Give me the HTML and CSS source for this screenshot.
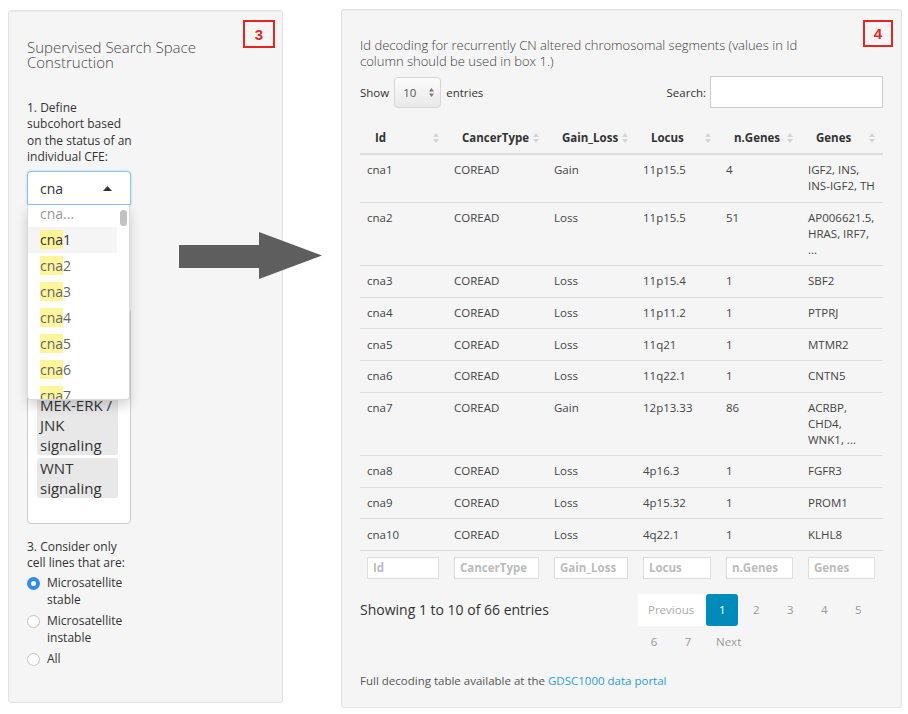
FILE: index.html
```html
<!DOCTYPE html>
<html lang="en">
<head>
<meta charset="utf-8">
<title>CFE search space</title>
<link rel="stylesheet" href="styles.css">
</head>
<body>
<div class="page">
  <section class="well well-left">
    <div class="badge badge-left">3</div>
    <h3 class="well-title">Supervised Search Space Construction</h3>
    <div class="form-col">
      <label class="ctl-label label-1">1. Define subcohort based on the status of an individual CFE:</label>
      <div class="sel-wrap">
        <div class="sel-input">
          <span>cna</span>
          <svg class="caret" width="9" height="5" viewBox="0 0 9 5"><polygon points="0,5 4.5,0 9,5" fill="#333"/></svg>
        </div>
        <div class="sel-dropdown">
          <div class="sel-options">
            <div class="opt opt-muted">cna...</div>
            <div class="opt opt-active"><mark>cna</mark>1</div>
            <div class="opt"><mark>cna</mark>2</div>
            <div class="opt"><mark>cna</mark>3</div>
            <div class="opt"><mark>cna</mark>4</div>
            <div class="opt"><mark>cna</mark>5</div>
            <div class="opt"><mark>cna</mark>6</div>
            <div class="opt"><mark>cna</mark>7</div>
          </div>
          <div class="scroll-thumb"></div>
        </div>
      </div>
      <div class="multi-box">
        <div class="chip">MEK-ERK / JNK signaling</div>
        <div class="chip">WNT signaling</div>
      </div>
      <label class="ctl-label label-3">3. Consider only cell lines that are:</label>
      <div class="radios">
        <div class="radio"><span class="radio-dot checked"></span><span>Microsatellite stable</span></div>
        <div class="radio"><span class="radio-dot"></span><span>Microsatellite instable</span></div>
        <div class="radio"><span class="radio-dot"></span><span>All</span></div>
      </div>
    </div>
  </section>

  <section class="well well-right">
    <div class="badge badge-right">4</div>
    <h4 class="table-title">Id decoding for recurrently CN altered chromosomal segments (values in Id column should be used in box 1.)</h4>
    <div class="dt-controls">
      <div class="len">
        <span>Show</span>
        <div class="len-select">
          <span>10</span>
          <svg width="5" height="9" viewBox="0 0 5 9"><polygon points="2.5,0 5,3.5 0,3.5" fill="#777"/><polygon points="0,5.5 5,5.5 2.5,9" fill="#777"/></svg>
        </div>
        <span>entries</span>
      </div>
      <div class="search">
        <span>Search:</span>
        <div class="search-input"></div>
      </div>
    </div>

    <table class="dt">
      <colgroup>
        <col class="c-id"><col class="c-ct"><col class="c-gl"><col class="c-lo"><col class="c-ng"><col class="c-ge">
      </colgroup>
      <thead>
        <tr>
          <th><div class="th-in"><span>Id</span><svg class="sort" width="6" height="10" viewBox="0 0 6 10"><polygon points="3,0 6,4 0,4"/><polygon points="0,6 6,6 3,10"/></svg></div></th>
          <th><div class="th-in"><span>CancerType</span><svg class="sort" width="6" height="10" viewBox="0 0 6 10"><polygon points="3,0 6,4 0,4"/><polygon points="0,6 6,6 3,10"/></svg></div></th>
          <th><div class="th-in"><span>Gain_Loss</span><svg class="sort" width="6" height="10" viewBox="0 0 6 10"><polygon points="3,0 6,4 0,4"/><polygon points="0,6 6,6 3,10"/></svg></div></th>
          <th><div class="th-in"><span>Locus</span><svg class="sort" width="6" height="10" viewBox="0 0 6 10"><polygon points="3,0 6,4 0,4"/><polygon points="0,6 6,6 3,10"/></svg></div></th>
          <th><div class="th-in"><span>n.Genes</span><svg class="sort" width="6" height="10" viewBox="0 0 6 10"><polygon points="3,0 6,4 0,4"/><polygon points="0,6 6,6 3,10"/></svg></div></th>
          <th><div class="th-in"><span>Genes</span><svg class="sort" width="6" height="10" viewBox="0 0 6 10"><polygon points="3,0 6,4 0,4"/><polygon points="0,6 6,6 3,10"/></svg></div></th>
        </tr>
      </thead>
      <tbody>
        <tr><td>cna1</td><td>COREAD</td><td>Gain</td><td>11p15.5</td><td>4</td><td>IGF2, INS, INS-IGF2, TH</td></tr>
        <tr><td>cna2</td><td>COREAD</td><td>Loss</td><td>11p15.5</td><td>51</td><td>AP006621.5, HRAS, IRF7, ...</td></tr>
        <tr><td>cna3</td><td>COREAD</td><td>Loss</td><td>11p15.4</td><td>1</td><td>SBF2</td></tr>
        <tr><td>cna4</td><td>COREAD</td><td>Loss</td><td>11p11.2</td><td>1</td><td>PTPRJ</td></tr>
        <tr><td>cna5</td><td>COREAD</td><td>Loss</td><td>11q21</td><td>1</td><td>MTMR2</td></tr>
        <tr><td>cna6</td><td>COREAD</td><td>Loss</td><td>11q22.1</td><td>1</td><td>CNTN5</td></tr>
        <tr><td>cna7</td><td>COREAD</td><td>Gain</td><td>12p13.33</td><td>86</td><td>ACRBP, CHD4, WNK1, ...</td></tr>
        <tr><td>cna8</td><td>COREAD</td><td>Loss</td><td>4p16.3</td><td>1</td><td>FGFR3</td></tr>
        <tr><td>cna9</td><td>COREAD</td><td>Loss</td><td>4p15.32</td><td>1</td><td>PROM1</td></tr>
        <tr><td>cna10</td><td>COREAD</td><td>Loss</td><td>4q22.1</td><td>1</td><td>KLHL8</td></tr>
      </tbody>
      <tfoot>
        <tr>
          <td><input class="flt" type="text" placeholder="Id"></td>
          <td><input class="flt" type="text" placeholder="CancerType"></td>
          <td><input class="flt" type="text" placeholder="Gain_Loss"></td>
          <td><input class="flt" type="text" placeholder="Locus"></td>
          <td><input class="flt" type="text" placeholder="n.Genes"></td>
          <td><input class="flt" type="text" placeholder="Genes"></td>
        </tr>
      </tfoot>
    </table>

    <div class="dt-bottom">
      <div class="info">Showing 1 to 10 of 66 entries</div>
      <div class="pager">
        <span class="pg pg-prev">Previous</span>
        <span class="pg pg-active">1</span>
        <span class="pg">2</span>
        <span class="pg">3</span>
        <span class="pg">4</span>
        <span class="pg">5</span>
        <span class="pg">6</span>
        <span class="pg">7</span>
        <span class="pg">Next</span>
      </div>
    </div>

    <p class="note">Full decoding table available at the <a href="#">GDSC1000 data portal</a></p>
  </section>

  <svg class="arrow" width="143" height="47" viewBox="0 0 143 47"><polygon points="0,13 80,13 80,0 143,23.5 80,47 80,36 0,36" fill="#5e5e5e"/></svg>
</div>
</body>
</html>
```
FILE: styles.css
```css
* { box-sizing: border-box; }
html, body { margin: 0; padding: 0; background: #fff; }
body {
  font-family: "Open Sans", "Liberation Sans", sans-serif;
  color: #333;
}

.page {
  position: relative;
  width: 908px;
  height: 714px;
  display: flex;
  align-items: flex-start;
  gap: 58px;
  padding: 9px 6px 0 8px;
}

.well {
  position: relative;
  background: #f5f5f5;
  border: 1px solid #e3e3e3;
  border-radius: 3px;
  box-shadow: inset 0 1px 1px rgba(0, 0, 0, 0.04);
}

.well-left {
  width: 275px;
  height: 693px;
  margin-top: 1px;
  padding: 29px 0 0 18px;
}

.well-right {
  width: 561px;
  height: 699px;
  padding: 27px 18px 0 18px;
}

.badge {
  position: absolute;
  display: flex;
  align-items: center;
  justify-content: center;
  border: 2px solid #e5261f;
  color: #e5261f;
  font-family: "Liberation Sans", Arial, sans-serif;
  font-weight: 700;
  font-size: 15px;
}
.badge-left { top: 9px; right: 7px; width: 32px; height: 28px; }
.badge-right { top: 10px; right: 8px; width: 30px; height: 27px; }

.well-title {
  margin: 0;
  max-width: 200px;
  font-size: 15px;
  line-height: 15px;
  font-weight: 300;
  color: #4a4a4a;
}

.form-col { width: 104px; margin-top: 30px; }

.ctl-label {
  display: block;
  font-size: 12px;
  line-height: 16.3px;
  font-weight: 400;
  color: #333;
}
.label-1 { width: 108px; }

.sel-wrap { position: relative; margin-top: 6px; }

.sel-input {
  height: 34px;
  border: 1px solid #8cc2ef;
  border-radius: 4px 4px 0 0;
  background: #fff;
  box-shadow: 0 0 3px rgba(102, 175, 233, 0.45);
  display: flex;
  align-items: center;
  justify-content: space-between;
  padding: 0 18px 0 12px;
  font-size: 14px;
  color: #333;
}
.caret { display: block; }

.sel-dropdown {
  position: absolute;
  top: 100%;
  left: 0;
  width: 103px;
  height: 195px;
  background: #fff;
  border: 1px solid #d9d9d9;
  border-top: 0;
  border-radius: 0 0 4px 4px;
  box-shadow: 0 6px 12px rgba(0, 0, 0, 0.17);
  overflow: hidden;
  z-index: 5;
}
.sel-options { margin-top: -4.5px; margin-right: 12px; }
.opt {
  height: 26px;
  line-height: 26px;
  padding-left: 12px;
  font-size: 14px;
  color: #666;
  white-space: nowrap;
}
.opt-muted { color: #999; }
.opt-active { background: #f5f5f5; color: #333; }
.opt mark { background: #fff59b; color: inherit; padding: 0; }
.scroll-thumb {
  position: absolute;
  top: 5px;
  right: 2px;
  width: 7px;
  height: 16px;
  border-radius: 4px;
  background: #c2c2c2;
}

.multi-box {
  margin-top: 103px;
  height: 216px;
  border: 1px solid #ccc;
  border-radius: 4px;
  background: #fff;
  padding: 86px 12px 0 9px;
}
.chip {
  background: #e8e8e8;
  border-radius: 3px;
  font-size: 15px;
  line-height: 20px;
  padding: 0 3px;
  color: #333;
  margin-bottom: 3px;
}

.label-3 { margin-top: 15px; }

.radios { margin-top: 3.5px; }
.radio {
  display: flex;
  align-items: flex-start;
  gap: 7px;
  font-size: 12px;
  line-height: 16.5px;
  margin-bottom: 5px;
  color: #333;
}
.radio-dot {
  flex: none;
  width: 13px;
  height: 13px;
  margin-top: 1.5px;
  border-radius: 50%;
  border: 1px solid #c4c4c4;
  background: #fff;
}
.radio-dot.checked { border: 4px solid #2f8cf0; background: #fff; }

/* right panel */
.table-title {
  margin: 0;
  max-width: 470px;
  font-size: 13px;
  line-height: 16px;
  font-weight: 300;
  color: #3f3f3f;
}

.dt-controls {
  margin-top: 7px;
  height: 32px;
  display: flex;
  align-items: center;
  justify-content: space-between;
  font-size: 11.5px;
  color: #333;
}
.len { display: flex; align-items: center; }
.len-select {
  width: 47px;
  height: 31px;
  margin: 0 5px;
  border: 1px solid #d6d6d6;
  border-radius: 4px;
  background: linear-gradient(#fcfcfc, #e9e9e9);
  display: flex;
  align-items: center;
  justify-content: space-between;
  padding: 0 6px 0 8px;
  color: #555;
  font-size: 11.5px;
}
.search { display: flex; align-items: center; }
.search-input {
  width: 173px;
  height: 32px;
  margin-left: 4px;
  border: 1px solid #ccc;
  background: #fff;
}

.dt {
  margin-top: 14px;
  width: 100%;
  border-collapse: collapse;
  table-layout: fixed;
  font-size: 11.5px;
  line-height: 16px;
}
.c-id { width: 87px; }
.c-ct { width: 100px; }
.c-gl { width: 89px; }
.c-lo { width: 83px; }
.c-ng { width: 82px; }
.c-ge { width: 82px; }

.dt th {
  padding: 8px 8px 7px 15px;
  border-bottom: 2px solid #ddd;
  font-weight: 700;
  text-align: left;
  color: #333;
}
.th-in { display: flex; align-items: center; justify-content: space-between; }
.sort { display: block; fill: #d4d4d4; flex: none; }

.dt td {
  padding: 7.3px 5px 7.3px 7px;
  border-top: 1px solid #ddd;
  vertical-align: top;
  color: #444;
}
.dt tfoot td { padding: 6px 8px 6px 7px; }
.flt {
  display: block;
  width: 100%;
  height: 22px;
  margin: 0;
  padding: 0 5px;
  border: 1px solid #ddd;
  background: #fff;
  font-family: inherit;
  font-size: 11.5px;
  font-weight: 700;
}
.flt::placeholder { color: #bbb; }

.dt-bottom {
  margin-top: 9px;
  display: flex;
  justify-content: space-between;
  align-items: flex-start;
}
.info { font-size: 14px; line-height: 32px; color: #333; }
.pager {
  width: 245px;
  display: flex;
  flex-wrap: wrap;
  gap: 0 2px;
}
.pg {
  height: 32px;
  line-height: 32px;
  min-width: 32px;
  padding: 0 10px;
  text-align: center;
  font-size: 11.5px;
  color: #999;
  border-radius: 3px;
}
.pg-prev { background: #fff; color: #aaa; border-radius: 0; }
.pg-active { background: #008cba; color: #fff; }

.note {
  margin: 15px 0 0;
  font-size: 11.5px;
  line-height: 16px;
  color: #555;
}
.note a { color: #2a9fd6; text-decoration: none; }

.arrow {
  position: absolute;
  left: 179px;
  top: 232px;
  display: block;
}
```
